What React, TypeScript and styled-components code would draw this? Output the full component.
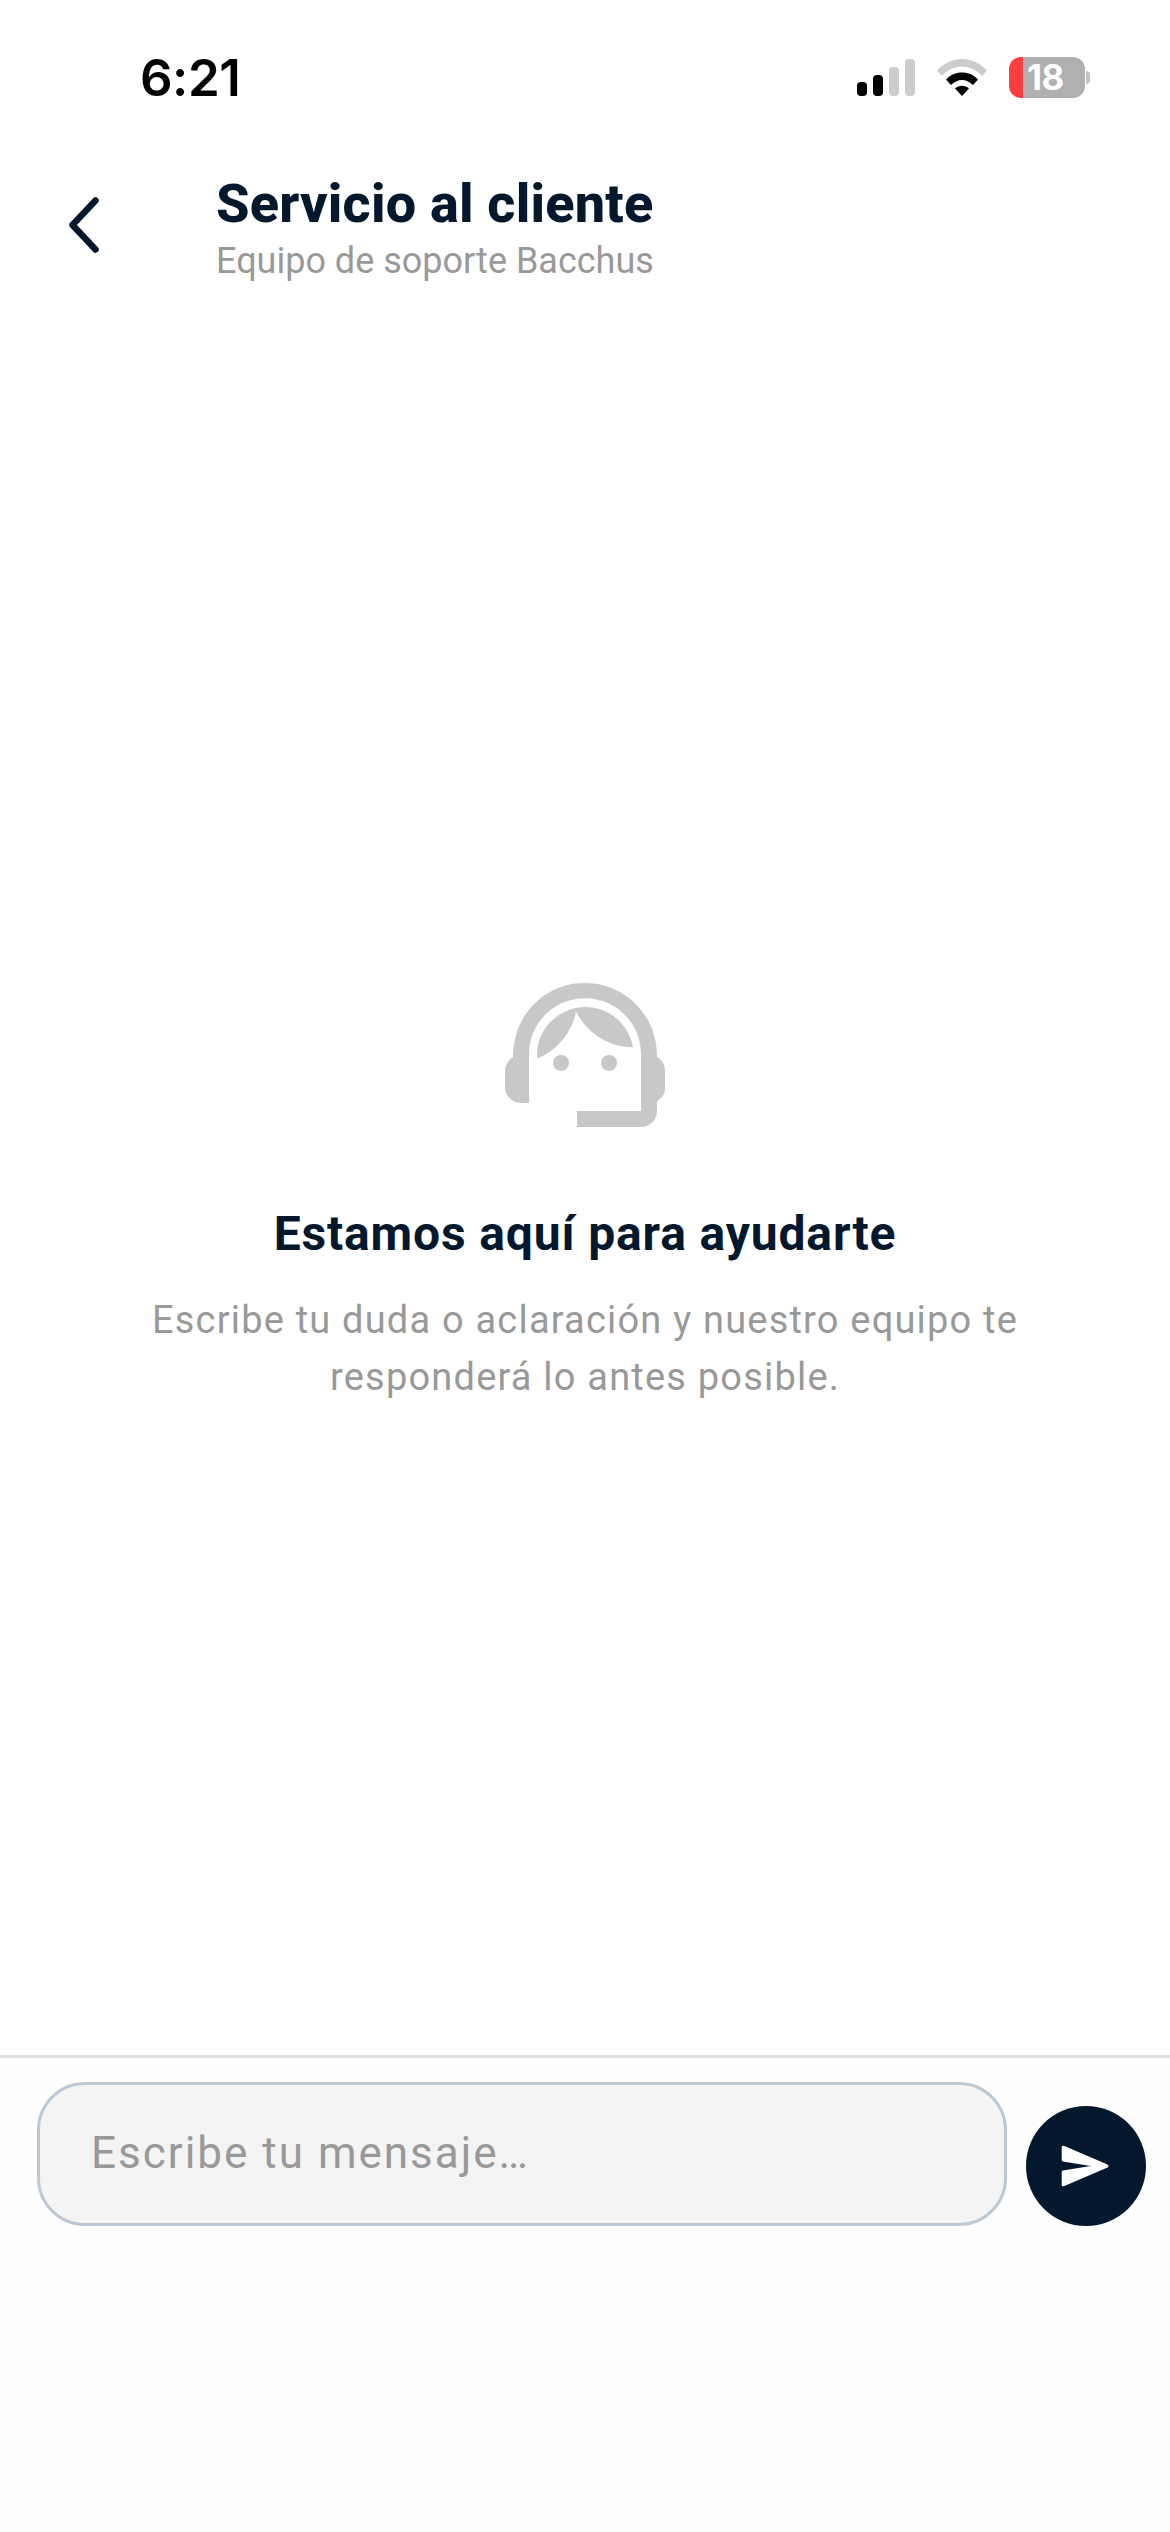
import React from "react";
import styled, { createGlobalStyle } from "styled-components";

const Global = createGlobalStyle`
  html, body { margin: 0; padding: 0; background: #fff; }
  * { box-sizing: border-box; }
`;

const Page = styled.div`
  width: 1170px;
  height: 2532px;
  display: flex;
  flex-direction: column;
  background: #fff;
  font-family: Roboto, "Liberation Sans", sans-serif;
  overflow: hidden;
`;

const StatusBar = styled.div`
  height: 156px;
  flex: none;
  display: flex;
  justify-content: space-between;
  align-items: flex-start;
  padding: 46px 80px 0 140px;
`;

const Clock = styled.div`
  font-family: Inter, sans-serif;
  font-weight: 600;
  font-size: 51px;
  line-height: 63px;
  letter-spacing: -0.5px;
  color: #000;
`;

const StatusIcons = styled.div`
  display: flex;
  align-items: flex-start;
  padding-top: 11px;
  gap: 22px;
`;

const Signal = styled.div`
  display: flex;
  align-items: flex-end;
  gap: 6px;
  height: 37px;
  margin-top: 2px;
`;

const SignalBar = styled.span<{ $h: number; $on?: boolean }>`
  width: 10px;
  height: ${(p) => p.$h}px;
  border-radius: 4px;
  background: ${(p) => (p.$on ? "#000" : "#cccccc")};
`;

const WifiIcon = styled.svg`
  display: block;
  width: 50px;
  height: 37px;
  margin-top: 2px;
`;

const BatteryWrap = styled.div`
  display: flex;
  align-items: center;
  height: 41px;
`;

const BatteryBody = styled.div`
  width: 76px;
  height: 41px;
  border-radius: 12px;
  overflow: hidden;
  display: flex;
`;

const BatteryRed = styled.div`
  width: 14px;
  background: #fc3d42;
`;

const BatteryLevel = styled.div`
  flex: 1;
  background: #b0b0b0;
  color: #fff;
  font-family: Inter, sans-serif;
  font-weight: 700;
  font-size: 35px;
  line-height: 41px;
  padding-left: 4px;
  letter-spacing: -0.5px;
`;

const BatteryNub = styled.div`
  width: 4px;
  height: 13px;
  margin-left: 1px;
  border-radius: 0 6px 6px 0;
  background: #c4c4c4;
`;

const Header = styled.header`
  flex: none;
  display: flex;
  align-items: flex-start;
  height: 130px;
  padding: 16px 0 0 66px;
`;

const BackIcon = styled.svg`
  display: block;
  width: 36px;
  height: 62px;
  margin-top: 22px;
`;

const Titles = styled.div`
  margin-left: 114px;
`;

const Title = styled.div`
  font-weight: 800;
  font-size: 54px;
  line-height: 64px;
  letter-spacing: 0.2px;
  color: #04182d;
`;

const Subtitle = styled.div`
  font-weight: 400;
  font-size: 36px;
  line-height: 46px;
  margin-top: 2px;
  color: #999999;
`;

const Empty = styled.main`
  flex: 1;
  display: flex;
  flex-direction: column;
  align-items: center;
  padding-top: 673px;
`;

const AgentIcon = styled.svg`
  display: block;
  width: 192px;
  height: 192px;
  fill: #c8c8c8;
`;

const EmptyTitle = styled.div`
  margin-top: 54px;
  font-weight: 700;
  font-size: 48px;
  line-height: 58px;
  letter-spacing: 0.85px;
  color: #04182d;
`;

const EmptyText = styled.div`
  margin-top: 29px;
  width: 900px;
  text-align: center;
  font-size: 38px;
  line-height: 57px;
  letter-spacing: 1.2px;
  color: #999999;
`;

const Composer = styled.footer`
  flex: none;
  height: 477px;
  border-top: 3px solid #e0e0e0;
  background: #fefefe;
  display: flex;
  align-items: flex-start;
  gap: 19px;
  padding: 24px 24px 0 37px;
`;

const InputBox = styled.div`
  width: 970px;
  height: 144px;
  flex: none;
  display: flex;
  align-items: center;
  padding-left: 51px;
  padding-bottom: 2px;
  background: #f4f4f4;
  border: 3px solid #bcc8d4;
  border-radius: 48px;
  font-size: 44px;
  letter-spacing: 2px;
  color: #999999;
`;

const SendButton = styled.button`
  width: 120px;
  height: 120px;
  margin-top: 24px;
  flex: none;
  padding: 0;
  border: 0;
  border-radius: 50%;
  background: #04182d;
  display: block;
`;

const SendIcon = styled.svg`
  display: block;
  width: 120px;
  height: 120px;
`;

export default function App() {
  return (
    <Page>
      <Global />
      <StatusBar>
        <Clock>6:21</Clock>
        <StatusIcons>
          <Signal>
            <SignalBar $h={14} $on />
            <SignalBar $h={21} $on />
            <SignalBar $h={29} />
            <SignalBar $h={37} />
          </Signal>
          <WifiIcon viewBox="0 0 50 37">
            <path d="M0 11.5C6.5 4.5 15.5 0 25 0s18.500 4.500 25 11.500l-5 5.500C39.500 11 32.500 7.500 25 7.500S10.500 11 5 17z" fill="#cccccc" />
            <path d="M9 20.500C13 16 19 13.500 25 13.500s12 2.500 16 7l-5 5.500C33 23 29 21 25 21s-8 2-11 5z" fill="#000" />
            <path d="M18 29.500c2-1.800 4.500-2.800 7-2.800s5 1 7 2.800L25 37z" fill="#000" />
          </WifiIcon>
          <BatteryWrap>
            <BatteryBody>
              <BatteryRed />
              <BatteryLevel>18</BatteryLevel>
            </BatteryBody>
            <BatteryNub />
          </BatteryWrap>
        </StatusIcons>
      </StatusBar>
      <Header>
        <BackIcon viewBox="0 0 36 62" fill="none">
          <path d="M29.500 6.500 L6.500 31 L29.500 55.500" stroke="#04182d" strokeWidth="6.500" strokeLinecap="round" strokeLinejoin="round" />
        </BackIcon>
        <Titles>
          <Title>Servicio al cliente</Title>
          <Subtitle>Equipo de soporte Bacchus</Subtitle>
        </Titles>
      </Header>
      <Empty>
        <AgentIcon viewBox="0 0 24 24">
          <path d="M21 12.220C21 6.730 16.740 3 12 3c-4.690 0-9 3.650-9 9.280-.6.340-1 .980-1 1.720v2c0 1.100.9 2 2 2h1v-6.100c0-3.870 3.130-7 7-7s7 3.130 7 7V19h-8v2h8c1.100 0 2-.9 2-2v-1.220c.590-.310 1-.920 1-1.610v-2.300c0-.670-.410-1.280-1-1.650z" />
          <circle cx="9" cy="13" r="1" />
          <circle cx="15" cy="13" r="1" />
          <path d="M18 11.030C17.520 8.180 15.040 6 12.050 6c-3.030 0-6.290 2.510-6.030 6.450 2.470-1.010 4.330-3.210 4.860-5.890 1.310 2.630 4 4.470 7.120 4.470z" />
        </AgentIcon>
        <EmptyTitle>Estamos aquí para ayudarte</EmptyTitle>
        <EmptyText>Escribe tu duda o aclaración y nuestro equipo te responderá lo antes posible.</EmptyText>
      </Empty>
      <Composer>
        <InputBox>Escribe tu mensaje…</InputBox>
        <SendButton aria-label="Enviar">
          <SendIcon viewBox="0 0 120 120">
            <path d="M37.200 41.200 L81 60 L37.200 78.800 L37.200 66 L74 60 L37.200 54 Z" fill="#fff" stroke="#fff" strokeWidth="3" strokeLinejoin="round" />
          </SendIcon>
        </SendButton>
      </Composer>
    </Page>
  );
}
